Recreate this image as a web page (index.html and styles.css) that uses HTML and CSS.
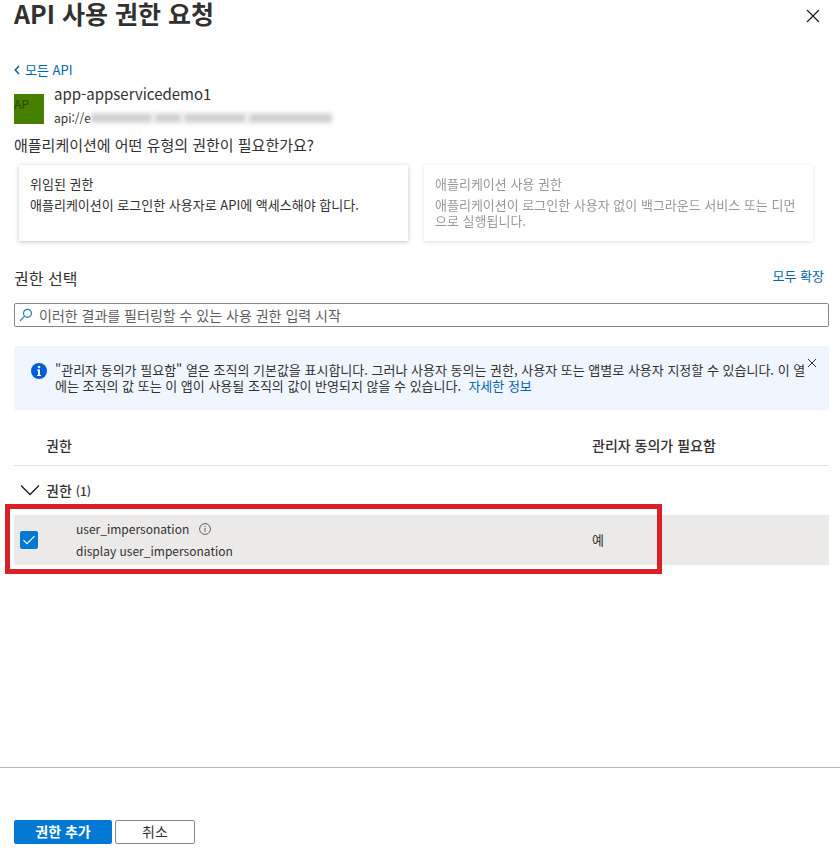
FILE: index.html
```html
<!DOCTYPE html>
<html lang="ko">
<head>
<meta charset="utf-8">
<meta name="viewport" content="width=device-width, initial-scale=1">
<title>API 사용 권한 요청</title>
<link rel="stylesheet" href="styles.css">
</head>
<body>
<header class="header">
  <h1 class="title">API 사용 권한 요청</h1>
  <button class="icon-button" type="button" aria-label="닫기">
    <svg width="14" height="14" viewBox="0 0 14 14"><path d="M1 1l12 12M13 1L1 13" fill="none" stroke="#1b1a19" stroke-width="1.2"/></svg>
  </button>
</header>

<main class="content">
  <a class="back link" href="#">
    <svg width="6" height="10" viewBox="0 0 6 10"><path d="M5 1L1.200 5 5 9" fill="none" stroke="currentColor" stroke-width="1.500"/></svg>
    <span>모든 API</span>
  </a>

  <section class="app">
    <div class="app-logo">AP</div>
    <div>
      <h2 class="app-name">app-appservicedemo1</h2>
      <div class="app-uri">
        <span>api://e</span>
        <span class="redacted" aria-hidden="true"><i></i><i></i><i></i><i></i></span>
      </div>
    </div>
  </section>

  <p class="question">애플리케이션에 어떤 유형의 권한이 필요한가요?</p>

  <div class="cards">
    <button class="card" type="button">
      <span>위임된 권한</span>
      <span class="card-text">애플리케이션이 로그인한 사용자로 API에 액세스해야 합니다.</span>
    </button>
    <button class="card" type="button" disabled>
      <span>애플리케이션 사용 권한</span>
      <span class="card-text">애플리케이션이 로그인한 사용자 없이 백그라운드 서비스 또는 디먼으로 실행됩니다.</span>
    </button>
  </div>

  <div class="section-head">
    <h2 class="section-title">권한 선택</h2>
    <a class="link" href="#">모두 확장</a>
  </div>

  <label class="search">
    <svg width="14" height="14" viewBox="0 0 14 14"><g fill="none" stroke="#2b7ab5" stroke-width="1.200"><circle cx="8.500" cy="5.300" r="4"/><path d="M5.600 8.200L1 12.800"/></g></svg>
    <input type="text" aria-label="사용 권한 필터" placeholder="이러한 결과를 필터링할 수 있는 사용 권한 입력 시작">
  </label>

  <div class="notice">
    <svg class="notice-icon" width="16" height="16" viewBox="0 0 16 16"><circle cx="8" cy="8" r="8" fill="#015cda"/><circle cx="8" cy="4" r="1.300" fill="#fff"/><path d="M6 6.500h3V12h1v1H6v-1h1V7.500H6z" fill="#fff"/></svg>
    <p class="notice-text">"관리자 동의가 필요함" 열은 조직의 기본값을 표시합니다. 그러나 사용자 동의는 권한, 사용자 또는 앱별로 사용자 지정할 수 있습니다. 이 열에는 조직의 값 또는 이 앱이 사용될 조직의 값이 반영되지 않을 수 있습니다.&nbsp; <a class="link" href="#">자세한 정보</a></p>
    <button class="icon-button" type="button" aria-label="알림 닫기">
      <svg width="10" height="10" viewBox="0 0 10 10"><path d="M1 1l8 8M9 1L1 9" fill="none" stroke="#323130"/></svg>
    </button>
  </div>

  <table class="permissions">
    <thead>
      <tr>
        <td class="col-check"></td>
        <th class="col-name" scope="col">권한</th>
        <th scope="col">관리자 동의가 필요함</th>
      </tr>
    </thead>
    <tbody>
      <tr class="group">
        <td>
          <button class="icon-button" type="button" aria-label="그룹 축소">
            <svg width="20" height="12" viewBox="0 0 20 12"><path d="M1 1.500l9 9 9-9" fill="none" stroke="#1b1a19" stroke-width="1.300"/></svg>
          </button>
        </td>
        <th colspan="2" scope="rowgroup">권한 <span class="count">(1)</span></th>
      </tr>
      <tr class="item">
        <td>
          <span class="check">
            <input id="perm" type="checkbox" checked>
            <svg width="18" height="18" viewBox="0 0 18 18"><path d="M3.500 9.200l3.500 3.500 7.500-7.500" fill="none" stroke="#fff" stroke-width="1.200"/></svg>
          </span>
          <span class="highlight"></span>
        </td>
        <td class="perm">
          <label class="perm-name" for="perm">user_impersonation
            <svg width="12" height="12" viewBox="0 0 12 12"><circle cx="6" cy="6" r="5.400" fill="none" stroke="#605e5c"/><path d="M6 5v4M6 3v1" stroke="#605e5c"/></svg>
          </label>
          <div>display user_impersonation</div>
        </td>
        <td>예</td>
      </tr>
    </tbody>
  </table>
</main>

<footer class="footer">
  <button class="button primary" type="button">권한 추가</button>
  <button class="button" type="button">취소</button>
</footer>
</body>
</html>
```
FILE: styles.css
```css
* {
  box-sizing: border-box;
}

body {
  display: flex;
  flex-direction: column;
  min-height: 100vh;
  margin: 0;
  background: #fff;
  color: #323130;
  font: 13px/16px "Noto Sans CJK KR", sans-serif;
}

h1, h2, p {
  margin: 0;
  font-weight: 400;
}

button, input {
  color: inherit;
  font: inherit;
}

.link {
  color: #0067b0;
  text-decoration: none;
}

.icon-button {
  display: flex;
  padding: 0;
  border: 0;
  background: none;
}

.header {
  display: flex;
  align-items: flex-start;
  justify-content: space-between;
  padding: 0 20px 0 14px;
}

.header .icon-button {
  margin-top: 9px;
}

.title {
  font-size: 25px;
  font-weight: 700;
  line-height: 26px;
}

.content {
  flex: 1;
  padding: 36px 11px 16px 14px;
}

.back {
  display: flex;
  align-items: center;
  gap: 5px;
  width: max-content;
}

.app {
  display: flex;
  align-items: center;
  gap: 10px;
  margin-top: 4px;
}

.app-logo {
  width: 30px;
  height: 30px;
  margin-top: 6px;
  background: #458000;
  color: #264700;
  font-size: 12px;
  line-height: 20px;
}

.app-name {
  font-size: 15px;
  line-height: 24px;
}

.app-uri {
  display: flex;
  align-items: center;
  font-size: 12px;
  line-height: 24px;
}

.redacted {
  display: flex;
  gap: 5px;
  height: 12px;
  padding: 2px 0;
  background: #f0f0f0;
  filter: blur(2px);
}

.redacted i {
  width: 60px;
  background: #cfcfcf;
}

.redacted i:nth-child(2) {
  width: 24px;
}

.redacted i:last-child {
  width: 82px;
}

.question {
  margin-top: 5px;
  font-size: 15px;
  line-height: 20px;
}

.cards {
  display: grid;
  grid-template-columns: 1fr 1fr;
  gap: 16px;
  padding: 10px 16px 0 5px;
}

.card {
  display: flex;
  flex-direction: column;
  gap: 5px;
  min-height: 76px;
  padding: 11px;
  border: 0;
  background: #fff;
  box-shadow: 0 1px 4px rgba(0, 0, 0, 0.25);
  text-align: left;
}

.card:disabled {
  opacity: 0.5;
}

.section-head {
  display: flex;
  align-items: flex-start;
  justify-content: space-between;
  margin-top: 25px;
  padding-right: 5px;
}

.section-title {
  font-size: 16px;
  line-height: 24px;
}

.section-head .link {
  line-height: 20px;
}

.search {
  display: flex;
  align-items: center;
  gap: 6px;
  height: 24px;
  margin-top: 13px;
  padding: 0 4px;
  border: 1px solid #8a8886;
  border-radius: 2px;
}

.search input {
  flex: 1;
  min-width: 0;
  padding: 0;
  border: 0;
  outline: 0;
  background: none;
  font-size: 14px;
}

.search input::placeholder {
  color: #605e5c;
}

.notice {
  display: flex;
  align-items: flex-start;
  min-height: 64px;
  margin-top: 19px;
  padding: 12px 12px 12px 17px;
  background: #f0f6ff;
}

.notice-icon {
  flex: none;
  margin: 5px 8px 0 0;
}

.notice-text {
  flex: 1;
  padding-top: 4px;
}

.permissions {
  width: 100%;
  margin-top: 15px;
  border-collapse: collapse;
  table-layout: fixed;
}

.permissions th,
.permissions td {
  padding: 0;
  text-align: left;
}

.permissions th {
  font-size: 14px;
  font-weight: 500;
}

.permissions thead tr {
  height: 40px;
  border-bottom: 1px solid #e1e1e1;
}

.col-check {
  width: 32px;
}

.col-name {
  width: 67%;
}

.group {
  height: 50px;
}

.permissions .group td {
  padding-left: 6px;
}

.count {
  font-size: 12px;
}

.item {
  position: relative;
  height: 50px;
  background: #ebeae9;
}

.permissions .item td:first-child {
  padding-left: 6px;
}

.permissions .perm {
  padding-left: 30px;
  font-size: 12px;
  line-height: 22px;
}

.perm-name {
  display: flex;
  align-items: center;
  gap: 10px;
}

.check {
  display: grid;
  width: 18px;
}

.check > * {
  grid-area: 1 / 1;
}

.check input {
  width: 18px;
  height: 18px;
  margin: 0;
  appearance: none;
  border-radius: 2px;
  background: #0078d4;
}

.check svg {
  position: relative;
  pointer-events: none;
}

.highlight {
  position: absolute;
  inset: -11px 20.5% -9px -9px;
  border: 5px solid #da2128;
  pointer-events: none;
}

.footer {
  display: flex;
  gap: 3px;
  padding: 52px 14px 12px;
  border-top: 1px solid #b3b3b3;
}

.button {
  width: 80px;
  height: 24px;
  padding: 0 0 2px;
  border: 1px solid #8a8886;
  border-radius: 2px;
  background: #fff;
  font-size: 14px;
}

.primary {
  width: 98px;
  border-color: #0078d4;
  background: #0078d4;
  color: #fff;
  font-weight: 700;
}
```
